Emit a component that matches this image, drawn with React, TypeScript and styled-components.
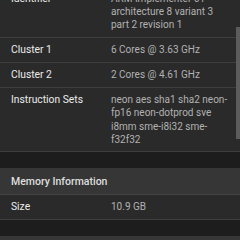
import React, { useLayoutEffect, useRef } from "react";
import styled, { createGlobalStyle } from "styled-components";

const Global = createGlobalStyle`
  html, body { margin: 0; padding: 0; background: #1d1d1d; }
  body { font-family: Roboto, "Liberation Sans", Arial, sans-serif; -webkit-font-smoothing: antialiased; }
`;

const Viewport = styled.div`
  position: relative;
  width: 240px;
  height: 240px;
  overflow: hidden;
  background: #1d1d1d;
`;

const Scroller = styled.div`
  height: 240px;
  overflow: hidden;
`;

const Content = styled.div`
  display: flex;
  flex-direction: column;
  gap: 16px;
  padding-bottom: 200px;
`;

const Card = styled.section`
  background: #2a2a2a;
  display: flex;
  flex-direction: column;
`;

const Header = styled.div`
  background: #363636;
  color: #dedede;
  font-size: 10.5px;
  font-weight: 500;
  line-height: 13px;
  padding: 6.5px 11px 6px;
  border-bottom: 1px solid #434343;
`;

const Row = styled.div`
  display: grid;
  grid-template-columns: 100px 1fr;
  padding: 5.4px 11px 5.4px 11px;
  border-bottom: 1px solid #3e3e3e;
  font-size: 10px;
  line-height: 13.2px;
`;

const Label = styled.div`
  color: #ececec;
  font-weight: 400;
  font-size: 10.3px;
`;

const Value = styled.div`
  color: #b2b2b2;
  overflow-wrap: break-word;
`;

const Thumb = styled.div`
  position: absolute;
  right: 0;
  top: 27px;
  width: 4px;
  height: 112px;
  background: #5c5c5c;
`;

type Item = { label: string; value: string };

const cpuRows: Item[] = [
  { label: "Name", value: "Apple M-series" },
  { label: "Identifier", value: "ARM Implementer 61 architecture 8 variant 3 part 2 revision 1" },
  { label: "Cluster 1", value: "6 Cores @ 3.63 GHz" },
  { label: "Cluster 2", value: "2 Cores @ 4.61 GHz" },
  {
    label: "Instruction Sets",
    value: "neon aes sha1 sha2 neon-fp16 neon-dotprod sve i8mm sme-i8i32 sme-f32f32",
  },
];

const memRows: Item[] = [{ label: "Size", value: "10.9 GB" }];

export default function App() {
  const scroller = useRef<HTMLDivElement>(null);
  const anchor = useRef<HTMLDivElement>(null);

  useLayoutEffect(() => {
    const s = scroller.current;
    const a = anchor.current;
    if (s && a) {
      const top = a.getBoundingClientRect().top - s.getBoundingClientRect().top;
      s.scrollTop = top + 13.4;
    }
  }, []);

  return (
    <>
      <Global />
      <Viewport>
        <Scroller ref={scroller}>
          <Content>
            <Card>
              <Header>Processor Information</Header>
              {cpuRows.map((r) => (
                <Row key={r.label} ref={r.label === "Identifier" ? anchor : undefined}>
                  <Label>{r.label}</Label>
                  <Value>{r.value}</Value>
                </Row>
              ))}
            </Card>
            <Card>
              <Header>Memory Information</Header>
              {memRows.map((r) => (
                <Row key={r.label}>
                  <Label>{r.label}</Label>
                  <Value>{r.value}</Value>
                </Row>
              ))}
            </Card>
            <Card>
              <Header>Storage Information</Header>
              <Row>
                <Label>Size</Label>
                <Value>256 GB</Value>
              </Row>
            </Card>
          </Content>
        </Scroller>
        <Thumb />
      </Viewport>
    </>
  );
}
